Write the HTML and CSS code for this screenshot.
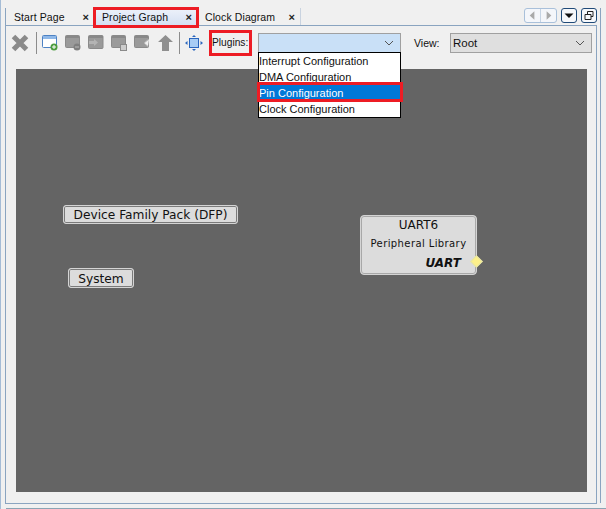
FILE: index.html
```html
<!DOCTYPE html>
<html lang="en">
<head>
<meta charset="utf-8">
<title>Project Graph</title>
<link rel="stylesheet" href="styles.css">
</head>
<body>
<div class="app">
  <div class="tabbar">
    <div class="tab tab-first"><span class="tab-label">Start Page</span><span class="tab-close">×</span></div>
    <div class="tab tab-active"><span class="tab-label">Project Graph</span><span class="tab-close">×</span></div>
    <div class="tab tab-last"><span class="tab-label">Clock Diagram</span><span class="tab-close">×</span></div>
    <div class="tab-controls">
      <div class="ctl-group">
        <svg class="ctl-half" viewBox="0 0 16 13"><path d="M10 2v9L5 6.500z" fill="#a9a9a9"/></svg>
        <svg class="ctl-half" viewBox="0 0 16 13"><path d="M6 2v9l5-4.500z" fill="#a9a9a9"/></svg>
      </div>
      <svg class="ctl-btn" viewBox="0 0 13 13"><path d="M2 4.500h9L6.500 9z" fill="#111"/></svg>
      <svg class="ctl-btn" viewBox="0 0 13 13"><path d="M2.500 5.500h6v5h-6zM5 5.500v-3h5.500v5h-2" fill="none" stroke="#222"/></svg>
    </div>
  </div>
  <div class="panel">
    <div class="toolbar">
      <svg class="ico ico-x" viewBox="0 0 18 18"><path d="M2.500 2.500l13 13M15.500 2.500l-13 13" stroke="#8a8a8a" stroke-width="5" fill="none"/></svg>
      <span class="sep"></span>
      <svg class="ico" viewBox="0 0 16 16"><rect x=".5" y=".5" width="14" height="12" rx="1" fill="#fff" stroke="#4d82c4"/><path d="M1 1h13v3H1z" fill="#8fb8e8"/><circle cx="12" cy="12" r="3.500" fill="#4c9c3e"/><path d="M10 12h4M12 10v4" stroke="#fff"/></svg>
      <svg class="ico" viewBox="0 0 16 16"><rect x=".5" y=".5" width="14" height="12" rx="1" fill="#9a9a9a" stroke="#8a8a8a"/><path d="M1 1h13v2H1z" fill="#888"/><circle cx="12" cy="12" r="3.500" fill="#7f7f7f"/><path d="M10 12h4" stroke="#bbb"/></svg>
      <svg class="ico" viewBox="0 0 16 16"><rect x=".5" y=".5" width="14.500" height="13" rx="1" fill="#9a9a9a" stroke="#8a8a8a"/><path d="M1 1h14v2H1z" fill="#888"/><path d="M6 4l4 3.500L6 11V9H1V6h5z" fill="#b4b4b4"/></svg>
      <svg class="ico" viewBox="0 0 16 16"><rect x=".5" y=".5" width="14" height="12" rx="1" fill="#9a9a9a" stroke="#8a8a8a"/><path d="M1 1h13v2H1z" fill="#888"/><rect x="9.500" y="9.500" width="6" height="6" fill="#ccc" stroke="#8a8a8a"/></svg>
      <svg class="ico" viewBox="0 0 16 16"><rect x=".5" y=".5" width="14" height="12" rx="1" fill="#9a9a9a" stroke="#8a8a8a"/><path d="M1 1h13v2H1z" fill="#888"/><path d="M15 4l-5 4 4 3.500" fill="#f0f0f0" stroke="#b4b4b4"/></svg>
      <svg class="ico ico-up" viewBox="0 0 15 16"><path d="M7.500 0L15 7h-4v9H4V7H0z" fill="#8f8f8f"/></svg>
      <span class="sep sep-b"></span>
      <svg class="ico ico-fit" viewBox="0 0 18 16"><rect x="4.500" y="3.500" width="9" height="9" fill="#a8cdf5" stroke="#2a66bd"/><path d="M0 8l2.500-2v4zM18 8l-2.500-2v4zM9 0L7 2h4zM9 16l-2-2h4z" fill="#2a66bd"/></svg>
      <label class="lbl lbl-plugins">Plugins:</label>
      <div class="combo combo-plugins"><svg class="chev" viewBox="0 0 10 6"><path d="M1 1l4 4 4-4" fill="none" stroke="#555"/></svg></div>
      <label class="lbl lbl-view">View:</label>
      <div class="combo combo-view"><span>Root</span><svg class="chev" viewBox="0 0 10 6"><path d="M1 1l4 4 4-4" fill="none" stroke="#555"/></svg></div>
    </div>
    <div class="canvas">
      <div class="node node-dfp">Device Family Pack (DFP)</div>
      <div class="node node-sys">System</div>
      <div class="node node-uart">
        <div class="uart-title">UART6</div>
        <div class="uart-sub">Peripheral Library</div>
        <div class="uart-type">UART</div>
        <span class="port"></span>
      </div>
    </div>
  </div>
  <div class="footer-line"></div>
</div>

<ul class="menu">
  <li>Interrupt Configuration</li>
  <li>DMA Configuration</li>
  <li class="menu-sel">Pin Configuration</li>
  <li>Clock Configuration</li>
</ul>
<div class="mark mark-tab"></div>
<div class="mark mark-plugins"></div>
<div class="mark mark-pin"></div>
<div class="side-line"></div>
<div class="left-line"></div>
</body>
</html>
```
FILE: styles.css
```css
html, body { margin: 0; padding: 0; }
body {
  width: 606px;
  height: 509px;
  overflow: hidden;
  position: relative;
  background: #f0f0f0;
  font-family: "Liberation Sans", Arial, sans-serif;
  font-size: 11px;
  color: #111;
}
.app { display: flex; flex-direction: column; height: 509px; padding-left: 5px; box-sizing: border-box; }

.tabbar { display: flex; height: 25px; width: 592px; align-items: flex-end; }
.tab {
  height: 17px;
  display: flex;
  align-items: center;
  justify-content: space-between;
  box-sizing: border-box;
  border-left: 1px solid #c9d3e0;
}
.tab-first { width: 89px; padding: 0 5px 0 8px; border-left-color: #8aa4c0; }
.tab-active { width: 104px; padding: 0 6px 0 7px; background: linear-gradient(#eef2fa, #d5e0f3); }
.tab-last { width: 103px; padding: 0 5px 0 7px; border-left: 0; border-right: 1px solid #c9d3e0; }
.tab-label { white-space: nowrap; font-size: 10.500px; letter-spacing: .1px; }
.tab-close { font-weight: 700; font-size: 11px; line-height: 12px; color: #222; }
.tab-controls { margin-left: auto; display: flex; align-items: center; gap: 4px; height: 17px; margin-bottom: 1px; }
.ctl-group { display: flex; width: 33px; height: 15px; border: 1px solid #a9c0da; border-radius: 3px; box-sizing: border-box; background: #f4f6fa; }
.ctl-half { width: 16px; height: 13px; }
.ctl-half + .ctl-half { border-left: 1px solid #c5d3e3; }
.ctl-btn { width: 16px; height: 15px; border: 1px solid #1f4a78; border-radius: 3px; box-sizing: border-box; background: #f6f8fb; }

.panel {
  width: 592px;
  height: 479px;
  box-sizing: border-box;
  border: 1px solid #8aa4c0;
  padding: 6px 9px 10px 10px;
  display: flex;
  flex-direction: column;
}
.toolbar { display: flex; align-items: center; height: 21px; margin-bottom: 16px; margin-left: -5px; position: relative; }
.ico { width: 16px; height: 16px; margin-right: 7px; flex: none; }
.ico-x { width: 18px; height: 18px; margin-right: 7px; margin-top: 1px; }
.ico-up { width: 15px; margin-right: 6px; margin-left: 1px; }
.ico-fit { width: 18px; margin-right: 9px; }
.sep { width: 1px; height: 22px; background: #8c8c8c; margin-right: 5px; flex: none; }
.sep-b { margin-right: 5px; }
.lbl { white-space: nowrap; font-size: 10.200px; }
.lbl-plugins { width: 46px; flex: none; }
.lbl-view { width: 36px; flex: none; margin-left: 13px; font-size: 10.500px; }
.combo {
  height: 20px;
  box-sizing: border-box;
  border: 1px solid #a0a0a0;
  display: flex;
  align-items: center;
  justify-content: space-between;
  padding: 0 4px 0 2px;
  flex: none;
}
.combo-plugins { width: 143px; background: #c9e0f7; justify-content: flex-end; }
.combo-view { width: 142px; background: #dfdfdf; font-size: 11.500px; }
.chev { width: 10px; height: 6px; margin-right: 2px; }

.canvas { position: relative; width: 571px; height: 423px; background: #646464; }
.node {
  position: absolute;
  box-sizing: border-box;
  background: #dcdcdc;
  border: 1px solid #d4d4d4;
  box-shadow: inset 0 0 0 1px #7a7a7a;
  border-radius: 3px;
  font-family: "DejaVu Sans", sans-serif;
  color: #111;
  text-align: center;
  white-space: nowrap;
}
.node-dfp { left: 47px; top: 136px; width: 175px; height: 19px; line-height: 19px; font-size: 12.200px; }
.node-sys { left: 52px; top: 199px; width: 66px; height: 20px; line-height: 20px; font-size: 12.200px; }
.node-uart { left: 344px; top: 146px; width: 117px; height: 60px; border-radius: 4px; padding-top: 2px; box-shadow: inset 0 0 0 1px #a8a8a8; }
.uart-title { font-size: 12px; line-height: 15px; }
.uart-sub { font-size: 10px; line-height: 12px; margin-top: 5px; letter-spacing: .4px; }
.uart-type { font-size: 12px; font-weight: 700; font-style: italic; text-align: right; padding-right: 15px; line-height: 14px; margin-top: 6px; }
.port { position: absolute; right: -5px; top: 41px; width: 9px; height: 9px; background: #fdf08a; transform: rotate(45deg); border: 1px solid #e4e4a8; box-sizing: border-box; }

.footer-line { position: absolute; left: 6px; right: 0; top: 508px; height: 1px; background: #8aa4b4; }
.side-line { position: absolute; left: 600px; top: 8px; width: 1px; height: 495px; background: #8aa4c0; }
.left-line { position: absolute; left: 0; top: 0; width: 1px; height: 509px; background: #a5bcd6; }

.menu {
  position: absolute;
  left: 258px;
  top: 52px;
  width: 143px;
  height: 66px;
  box-sizing: border-box;
  margin: 0;
  padding: 0;
  list-style: none;
  background: #fff;
  border: 1px solid #000;
  font-size: 11px;
}
.menu li { height: 16px; line-height: 16px; white-space: nowrap; }
.menu .menu-sel { background: #0078d7; color: #fff; }

.mark { position: absolute; box-sizing: border-box; border: 3px solid #ed1c24; }
.mark-tab { left: 93px; top: 7px; width: 106px; height: 21px; }
.mark-plugins { left: 209px; top: 30px; width: 43px; height: 26px; }
.mark-pin { left: 257px; top: 82px; width: 146px; height: 20px; }
```
